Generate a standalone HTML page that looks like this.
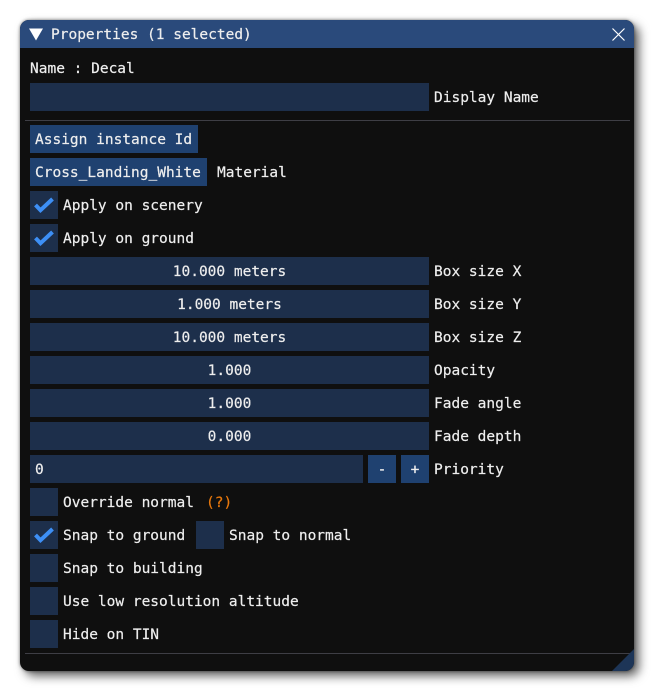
<!DOCTYPE html>
<html><head><meta charset="utf-8">
<style>
html,body{margin:0;padding:0;background:#fff;width:654px;height:691px;overflow:hidden}
#w{position:absolute;left:20px;top:20px;width:614px;height:651px;background:#0f0f0f;border-radius:9px;box-shadow:5px 5px 10px rgba(0,0,0,.62),0 0 3px rgba(0,0,0,.5);overflow:hidden}
#t{position:absolute;left:0;top:0;width:614px;height:28px;background:#2a4a7b}
.a{position:absolute}
.x{position:absolute;font:14.5px/30px "DejaVu Sans Mono","Liberation Mono",monospace;color:#eeeeee;-webkit-text-stroke:.2px #eeeeee;white-space:pre;height:28px}
.i{position:absolute;height:28px;background:#1d2f4b;left:10px}
.b{position:absolute;height:28px;background:#1f4170}
.c{position:absolute;width:28px;height:28px;background:#1d2f4b}
.n{position:absolute;left:10px;width:399px;height:28px;background:#1d2f4b;text-align:center;font:14.5px/30px "DejaVu Sans Mono","Liberation Mono",monospace;color:#eeeeee;-webkit-text-stroke:.2px #eeeeee}
.s{position:absolute;left:5px;width:605px;height:1px;background:#3e3e45}
</style></head><body>
<div id="w">
<div id="t"></div>
<svg class="a" style="left:9px;top:8px" width="15" height="13"><path d="M0 0.5H14L7 12.5Z" fill="#fff"/></svg>
<div class="x" style="left:31px;top:0">Properties (1 selected)</div>
<svg class="a" style="left:591px;top:7px" width="15" height="15"><path d="M1.5 1.5L13.5 13.5M13.5 1.5L1.5 13.5" stroke="#fff" stroke-width="1.2" fill="none"/></svg>

<div class="x" style="left:10px;top:34px">Name : Decal</div>
<div class="i" style="top:63px;width:399px"></div>
<div class="x" style="left:414px;top:63px">Display Name</div>
<div class="s" style="top:100px"></div>

<div class="b x" style="left:10px;top:105px;width:168px;text-indent:5px">Assign instance Id</div>
<div class="b x" style="left:10px;top:138px;width:177px;text-indent:5px">Cross_Landing_White</div>
<div class="x" style="left:197px;top:138px">Material</div>

<div class="c" style="left:10px;top:171px"></div>
<svg class="a" style="left:10px;top:171px" width="28" height="28"><path d="M5.5 14L10.5 19.2L22.5 8" stroke="#3d8ff5" stroke-width="4" fill="none"/></svg>
<div class="x" style="left:43px;top:171px">Apply on scenery</div>
<div class="c" style="left:10px;top:204px"></div>
<svg class="a" style="left:10px;top:204px" width="28" height="28"><path d="M5.5 14L10.5 19.2L22.5 8" stroke="#3d8ff5" stroke-width="4" fill="none"/></svg>
<div class="x" style="left:43px;top:204px">Apply on ground</div>

<div class="n" style="top:237px">10.000 meters</div><div class="x" style="left:414px;top:237px">Box size X</div>
<div class="n" style="top:270px">1.000 meters</div><div class="x" style="left:414px;top:270px">Box size Y</div>
<div class="n" style="top:303px">10.000 meters</div><div class="x" style="left:414px;top:303px">Box size Z</div>
<div class="n" style="top:336px">1.000</div><div class="x" style="left:414px;top:336px">Opacity</div>
<div class="n" style="top:369px">1.000</div><div class="x" style="left:414px;top:369px">Fade angle</div>
<div class="n" style="top:402px">0.000</div><div class="x" style="left:414px;top:402px">Fade depth</div>

<div class="i x" style="top:435px;width:333px;text-indent:5px">0</div>
<div class="b x" style="left:348px;top:435px;width:28px;text-align:center">-</div>
<div class="b x" style="left:381px;top:435px;width:28px;text-align:center">+</div>
<div class="x" style="left:414px;top:435px">Priority</div>

<div class="c" style="left:10px;top:468px"></div>
<div class="x" style="left:43px;top:468px">Override normal</div>
<div class="x" style="left:186px;top:468px;color:#e8780c;-webkit-text-stroke:.2px #e8780c">(?)</div>
<div class="c" style="left:10px;top:501px"></div>
<svg class="a" style="left:10px;top:501px" width="28" height="28"><path d="M5.5 14L10.5 19.2L22.5 8" stroke="#3d8ff5" stroke-width="4" fill="none"/></svg>
<div class="x" style="left:43px;top:501px">Snap to ground</div>
<div class="c" style="left:176px;top:501px"></div>
<div class="x" style="left:209px;top:501px">Snap to normal</div>
<div class="c" style="left:10px;top:534px"></div>
<div class="x" style="left:43px;top:534px">Snap to building</div>
<div class="c" style="left:10px;top:567px"></div>
<div class="x" style="left:43px;top:567px">Use low resolution altitude</div>
<div class="c" style="left:10px;top:600px"></div>
<div class="x" style="left:43px;top:600px">Hide on TIN</div>
<div class="s" style="top:633px"></div>
<svg class="a" style="left:590px;top:628px" width="24" height="23"><path d="M24 1V23H2Z" fill="#1d3557"/></svg>
</div>
</body></html>
